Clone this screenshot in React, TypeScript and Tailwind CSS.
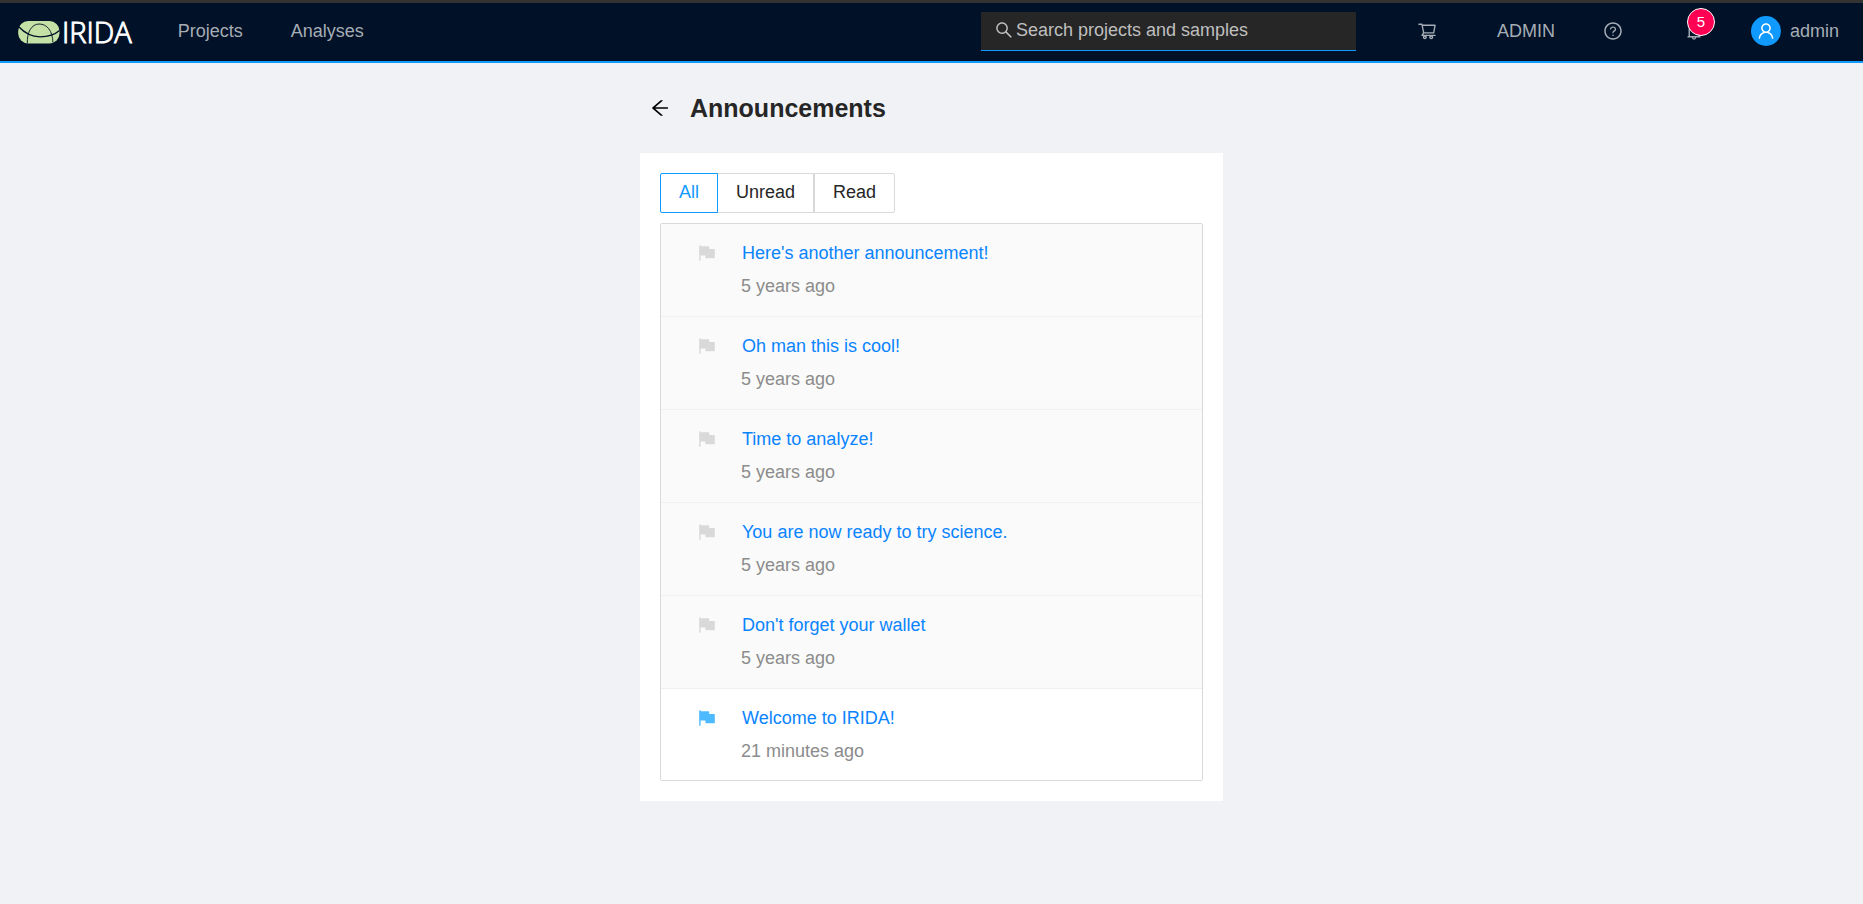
import React, { useState } from "react";
import {
  AiFillFlag,
  AiOutlineArrowLeft,
  AiOutlineBell,
  AiOutlineQuestionCircle,
  AiOutlineSearch,
  AiOutlineShoppingCart,
  AiOutlineUser,
} from "react-icons/ai";

type Filter = "All" | "Unread" | "Read";

interface Announcement {
  title: string;
  when: string;
  read: boolean;
}

const announcements: Announcement[] = [
  { title: "Here's another announcement!", when: "5 years ago", read: true },
  { title: "Oh man this is cool!", when: "5 years ago", read: true },
  { title: "Time to analyze!", when: "5 years ago", read: true },
  { title: "You are now ready to try science.", when: "5 years ago", read: true },
  { title: "Don't forget your wallet", when: "5 years ago", read: true },
  { title: "Welcome to IRIDA!", when: "21 minutes ago", read: false },
];

function Logo() {
  return (
    <a href="#home" className="flex items-center pt-0.5 text-white" aria-label="IRIDA">
      <svg viewBox="0 0 42 24" className="h-6 w-[42px]" aria-hidden="true">
        <rect x="0.2" y="1" width="41.3" height="22.4" rx="10" fill="#c5e1a5" />
        <g fill="none" stroke="#001128">
          <path d="M0.5 6.5 C7 13.5 14 16.8 22 16.8 C31 16.8 37 14.5 41.5 10.5" strokeWidth="1.3" />
          <path d="M9.3 23.4 C9 12 13.5 4.2 21 4 C29 4 34.5 10.5 35 22.8" strokeWidth="0.9" />
        </g>
      </svg>
      <span className="ml-0.5 font-['Open_Sans',sans-serif] text-[29px] leading-8 font-light [-webkit-text-stroke:1px_white]">
        IRIDA
      </span>
    </a>
  );
}

function Header() {
  return (
    <header className="flex h-[63px] items-center border-t-[3px] border-b-2 border-t-[#333333] border-b-[#1099ff] bg-[#001128] pr-6 pb-0.5 pl-[18px] text-[#a6adb4]">
      <Logo />
      <nav className="ml-[46px] flex gap-12">
        <a href="#projects">Projects</a>
        <a href="#analyses">Analyses</a>
      </nav>
      <label className="ml-auto flex h-[39px] w-[375px] items-center gap-0.5 border-b border-[#1099ff] bg-[#262626] px-[13px] pb-0.5 text-[#bfbfbf]">
        <AiOutlineSearch className="size-5 shrink-0" />
        <input
          type="search"
          aria-label="Search projects and samples"
          placeholder="Search projects and samples"
          className="min-w-0 flex-1 bg-transparent outline-none placeholder:text-[#bfbfbf]"
        />
      </label>
      <a href="#cart" aria-label="Cart" className="ml-[61px]">
        <AiOutlineShoppingCart className="size-5" />
      </a>
      <a href="#admin" className="ml-[60px]">ADMIN</a>
      <a href="#help" aria-label="Help" className="ml-12">
        <AiOutlineQuestionCircle className="size-5" />
      </a>
      <a href="#announcements" aria-label="5 unread announcements" className="relative ml-[61px]">
        <AiOutlineBell className="size-5" />
        <span className="absolute -top-[13px] left-[3px] flex size-7 items-center justify-center rounded-full border border-white bg-[#ff0052] text-[15px] text-white">
          5
        </span>
      </a>
      <a href="#account" className="ml-[47px] flex items-center gap-[9px]">
        <span className="flex size-[30px] items-center justify-center rounded-full bg-[#1099ff] text-white">
          <AiOutlineUser className="size-5" />
        </span>
        admin
      </a>
    </header>
  );
}

export default function App() {
  const [filter, setFilter] = useState<Filter>("All");
  const filters: Filter[] = ["All", "Unread", "Read"];
  const shown = announcements.filter(
    (item) => filter === "All" || item.read === (filter === "Read"),
  );

  return (
    <div className="min-h-screen bg-[#f0f2f5] font-['Liberation_Sans',Arial,sans-serif] text-[18px] leading-7 text-[#262626]">
      <Header />
      <main className="mx-auto w-full max-w-[583px]">
        <div className="flex h-[90px] items-center gap-[19px] pl-[9px]">
          <button type="button" aria-label="Back" className="text-black">
            <AiOutlineArrowLeft className="size-[22px]" />
          </button>
          <h1 className="text-[25px] font-bold">Announcements</h1>
        </div>
        <section className="bg-white p-5">
          <div className="flex">
            {filters.map((name) => (
              <button
                key={name}
                type="button"
                aria-pressed={filter === name}
                onClick={() => setFilter(name)}
                className={`h-10 border px-[18px] pb-0.5 first:-mr-px first:rounded-l-xs last:rounded-r-xs ${
                  filter === name ? "z-10 border-[#1099ff] text-[#1099ff]" : "border-[#d9d9d9]"
                }`}
              >
                {name}
              </button>
            ))}
          </div>
          <ul className="mt-[10px] divide-y divide-[#f0f0f0] overflow-hidden rounded-xs border border-[#d9d9d9]">
            {shown.map((item) => (
              <li
                key={item.title}
                className={`flex gap-6 px-9 pt-[15px] pb-4 last:pb-[15px] ${item.read ? "bg-[#fafafa]" : "bg-white"}`}
              >
                <AiFillFlag className={`mt-1 size-5 ${item.read ? "text-[#d9d9d9]" : "text-[#4dbaff]"}`} />
                <div>
                  <a href="#announcement" className="block pl-px text-[#0a84ff]">{item.title}</a>
                  <p className="mt-[5px] text-[#8c8c8c]">{item.when}</p>
                </div>
              </li>
            ))}
          </ul>
        </section>
      </main>
    </div>
  );
}
